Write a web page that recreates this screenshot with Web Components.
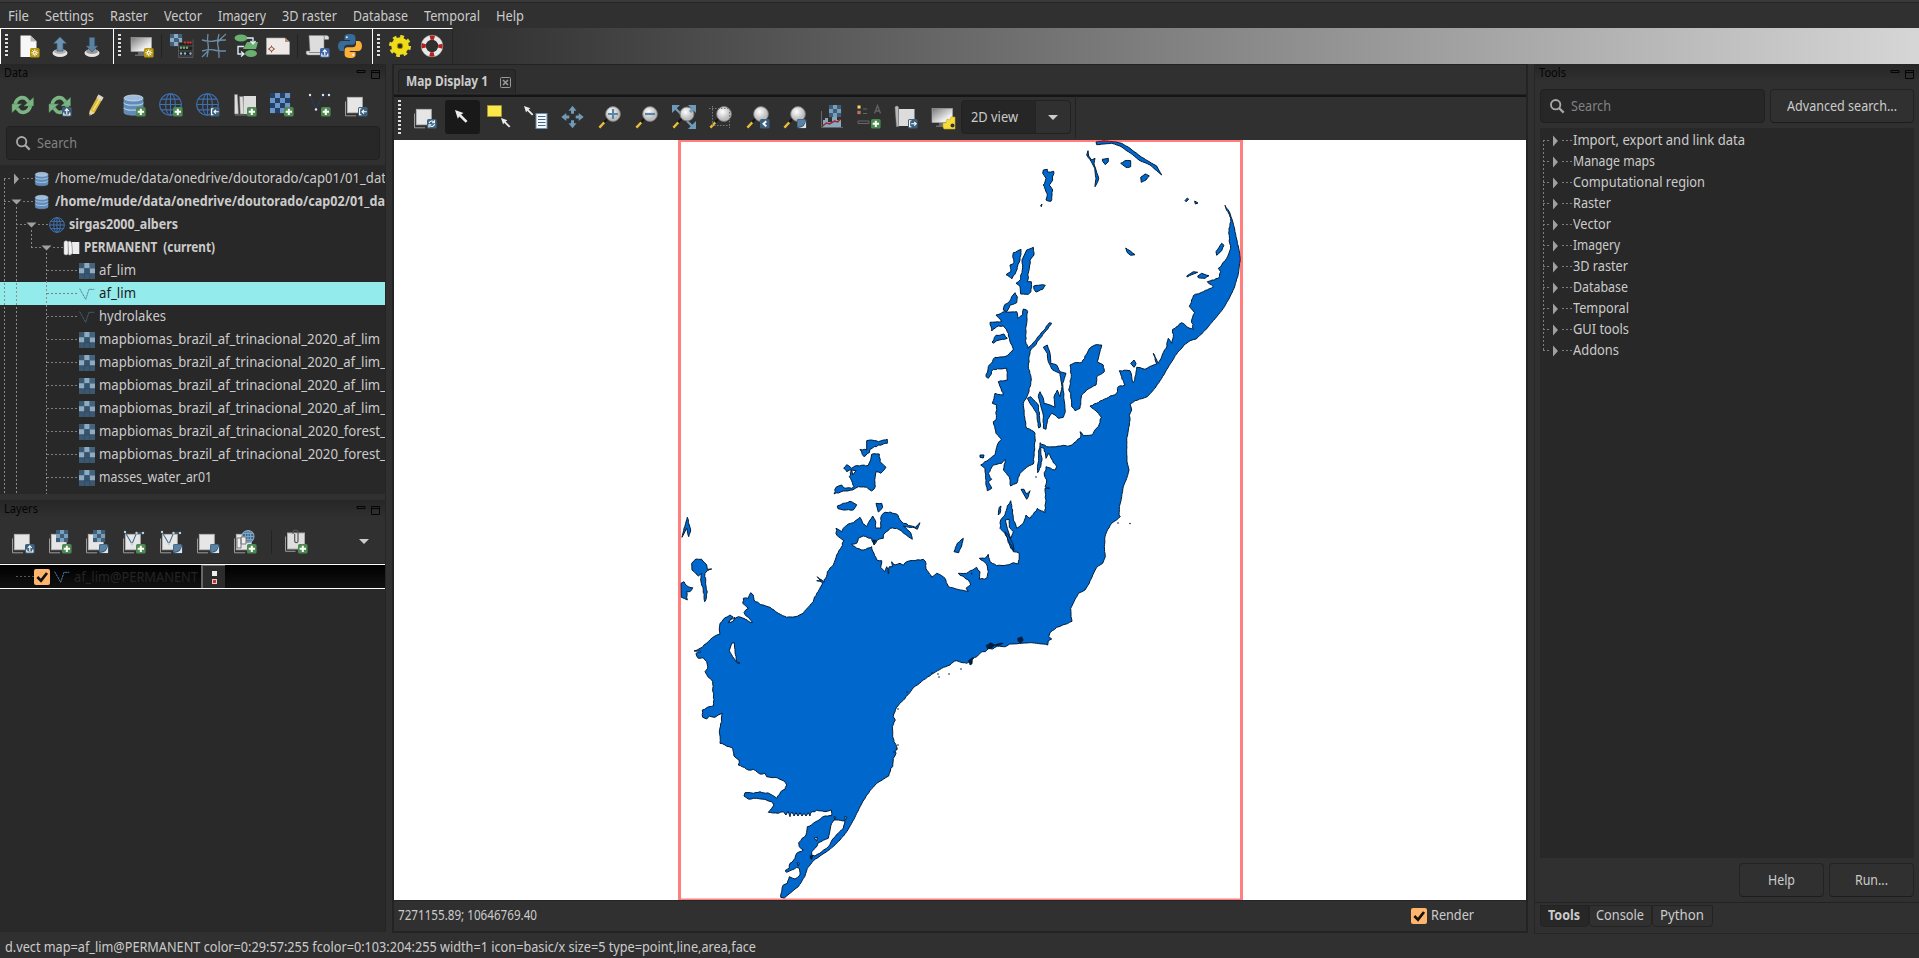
<!DOCTYPE html>
<html lang="en">
<head>
<meta charset="utf-8">
<title>GRASS GIS</title>
<style>
html,body{margin:0;height:100%;background:#303030;overflow:hidden}
body{font-family:"Noto Sans","Open Sans",sans-serif;font-size:14.6px;color:#cbcbcb}
</style>
</head>
<body>
<gis-window></gis-window>
<script>
const define = (name, css, html, after) => customElements.define(name, class extends HTMLElement {
  connectedCallback() {
    if (this.shadowRoot) return;
    const root = this.attachShadow({mode: 'open'});
    const body = typeof html === 'function' ? html(this) : html;
    root.innerHTML = `<style>*{box-sizing:border-box}${css}</style>${body}`;
    if (after) after(this, root);
  }
});

/* Text condensed to a given width */
define('fit-text', `:host{display:inline-block;white-space:pre;line-height:20px;flex:none;margin-bottom:3px}
  span{display:inline-block;transform-origin:0 50%}`, '<span><slot></slot></span>', (el, root) => {
  const span = root.querySelector('span'), w = +el.getAttribute('w');
  const natural = span.getBoundingClientRect().width;
  el.style.width = w + 'px';
  if (natural) span.style.transform = `scaleX(${w / natural})`;
});

/* ---------- icons ---------- */
const badge = (fill, inner) => `<rect x="14" y="14" width="9.6" height="9.6" rx="1.6" fill="${fill}"/>${inner}`;
const PLUS = badge('#4c8a50', '<path d="M18.8 15.7v6.3M15.7 18.8h6.3" stroke="#fff" stroke-width="2"/>');
const UP = badge('#3e607e', '<path d="M18.8 21v-4.6M16.8 18l2-2.2 2 2.2M15.8 19.5V22h6v-2.5" stroke="#fff" stroke-width="1.1" fill="none"/>');
const UPB = badge('#3f64a4', '<path d="M18.8 21v-4.6M16.8 18l2-2.2 2 2.2M15.8 19.5V22h6v-2.5" stroke="#fff" stroke-width="1.1" fill="none"/>');
const IN = badge('#3c5f7b', '<path d="M17.4 15.8h-1.8v6h1.8M22.8 18.8h-4.5M20 16.9l-2 1.9 2 1.9" stroke="#fff" stroke-width="1.1" fill="none"/>');
const OUT = badge('#3c5f7b', '<path d="M17.4 15.8h-1.8v6h1.8M17.2 18.8h4.8M20.2 16.9l2 1.9-2 1.9" stroke="#fff" stroke-width="1.1" fill="none"/>');
const RE = badge('#3c6583', '<path d="M16 18.2a3 3 0 0 1 4.6-1.6M21.6 19.2a3 3 0 0 1-4.6 1.7M21.4 15.2v2.6h-2.4M16 22.4v-2.6h2.4" stroke="#fff" stroke-width="1.1" fill="none"/>');
const BACK = badge('#3c5f7b', '<path d="M20.3 16.2l-2.8 2.6 2.8 2.6" stroke="#fff" stroke-width="1.9" fill="none"/>');
const STAR = badge('#b8960c', '<g stroke="#fff" stroke-width="1"><path d="M18.8 15.3v7M15.3 18.8h7M16.4 16.4l4.8 4.8M21.2 16.4l-4.8 4.8"/></g><circle cx="18.8" cy="18.8" r="1.3" fill="#b8960c" stroke="#fff" stroke-width=".9"/>');
const MOON = badge('#33536f', '<path d="M14.500 14.500h7.500v2.500q-1 4.500-7.500 5z" fill="#5d82a1"/><path d="M23 15.200v7.800h-8q7.500-.6 8-7.800z" fill="#dfe5ea"/>');
const LAYER = '<path d="M1.5 8.5v14.3h10.6" fill="none" stroke="#9a9a9a" stroke-width="1"/><rect x="3.3" y="4.3" width="15" height="15.5" fill="#e6e6e6" stroke="#b5b5b5" stroke-width=".8"/>';
const globe = (cx, cy, r, s, f = 'none') => `<g fill="${f}" stroke="${s}" stroke-width="1.1"><circle cx="${cx}" cy="${cy}" r="${r}"/><ellipse cx="${cx}" cy="${cy}" rx="${r*.45}" ry="${r}" fill="none"/><path d="M${cx-r} ${cy}h${2*r}M${cx-r*.85} ${cy-r*.5}h${1.7*r}M${cx-r*.85} ${cy+r*.5}h${1.7*r}M${cx} ${cy-r}v${2*r}"/></g>`;
const check = (x, y, s, n, a, b) => { let o = ''; for (let i = 0; i < n; i++) for (let j = 0; j < n; j++) o += `<rect x="${x+i*s}" y="${y+j*s}" width="${s+.1}" height="${s+.1}" fill="${(i+j)%2 ? b : a}"/>`; return o; };
const LENS = '<path d="M1.4 22.6l5-5.4" stroke="#e9bd37" stroke-width="2.4"/><path d="M6.2 17.2l3.2-3.4" stroke="#161616" stroke-width="2.2"/><circle cx="15" cy="9" r="7.4" fill="url(#lg)" stroke="#777" stroke-width=".9"/>';
const MON = '<rect x="1" y="3.5" width="20.5" height="14" fill="url(#mg)" stroke="#aaa" stroke-width=".6"/><path d="M8 18h7v2.6h3v1.4H5v-1.4h3z" fill="#6a6a6a"/>';
const VLINE = '<path d="M3 2l7 12L14.5 3H21" fill="none" stroke="#4a6f8e" stroke-width="1.1"/>';
const dots = (l, c) => l.map(([x, y]) => `<circle cx="${x}" cy="${y}" r="1.2" fill="${c}"/>`).join('');
const VDOTS = [[3,2],[10,14],[14.5,3],[21,3]];
const DB = '<path d="M2 5v14.5c0 3.6 19 3.6 19 0V5" fill="#5f8cba"/><path d="M2 9.5c0 3.6 19 3.6 19 0M2 14.5c0 3.6 19 3.6 19 0" fill="none" stroke="#b5cce3" stroke-width="1.3"/><ellipse cx="11.5" cy="5" rx="9.5" ry="3" fill="#9dbcdb" stroke="#dbe7f2" stroke-width=".7"/><path d="M2 5v14.5c0 3.6 19 3.6 19 0V5" fill="none" stroke="#7797b5" stroke-width=".7"/>';
const SYNC = '<g fill="none" stroke="#7ab583" stroke-width="3.600"><path d="M4.200 11.500C4.800 6.500 9.500 3.200 14.500 5.400l3.500 3.800"/><path d="M19.300 12.500C18.700 17.500 14 20.800 9 18.600L5.500 14.800"/></g><g fill="#7ab583" stroke="#4f8a58" stroke-width=".5"><path d="M22.500 4.500v8.500h-9.500zM1 19.500V11h9.500z"/></g>';
const BOOKS = '<path d="M1.500 1.500h3l1 19.500h-4zM6.500 3.500h3.500l.8 17.500h-3.600z" fill="#ddd" stroke="#777" stroke-width=".6"/><rect x="10.500" y="3" width="12.500" height="18" fill="#dcdcdc"/><path d="M2 22h20" stroke="#777"/>';
const ARR = (x, y, k = 1) => `<path transform="translate(${x} ${y}) scale(${k})" d="M0 0l8.500 3-2.400 1.600 6.400 6.400-1.800 1.800L4.300 6.400 2.800 8.800z" fill="#ececec"/>`;
const PAN = '<path d="M11.500 0l4 5h-2.500v3h-3V5H7.500z"/>';
const ICONS = {
  file: '<path d="M4.500 1.500h10l6 6v15.500H4.500z" fill="#f7f7f7"/><path d="M14.500 1.500v6h6z" fill="#b5b5b5"/>' + STAR,
  open: '<ellipse cx="12" cy="19" rx="7.500" ry="4" fill="#e4e4e4"/><ellipse cx="12" cy="17.500" rx="6" ry="2.500" fill="#b0b0b0"/><path d="M12 2.800l6.600 6.700h-3.600v7.500H9V9.500H5.400z" fill="#6d92b0" stroke="#39566f" stroke-width=".7"/>',
  save: '<ellipse cx="12" cy="19" rx="7.500" ry="4" fill="#e4e4e4"/><ellipse cx="12" cy="17.500" rx="6" ry="2.500" fill="#999"/><path d="M12 18l6-6h-3.300V3.500H9.300V12H6z" fill="#5a82a2" stroke="#39566f" stroke-width=".7"/>',
  display: MON + STAR,
  calc: check(0, 0, 4, 3, '#40607c', '#8aa8c2') + '<path d="M9 9h14v15H9z" fill="#222"/><path d="M8.500 5v18.500h14.500V5.500M9 12h14M9 17h14M9 22h14" stroke="#555" fill="none"/>' + dots([[15,8.500],[18,8.500],[20.500,8.500]], '#c4302f') + dots([[11,13.800],[14,13.800],[17,13.800]], '#70b070') + dots([[11,19.500],[15,19.500],[20.500,19.500]], '#8db6db'),
  grid: '<path d="M6 0q-1 5 0 10t-1 13M17 0q-2 8-1 12t1 12M24 0q-5 4-8 8M0 6q8 2 12 1t12-1M0 17q8-2 12-1t12 1M0 23l6-6" fill="none" stroke="#6d8ca5" stroke-width="1.300"/>',
  model: '<ellipse cx="7" cy="4" rx="6.500" ry="3.500" fill="#6bb070"/><path d="M13 8h11l-2 7H9z" fill="#6bb070"/><ellipse cx="17" cy="19.500" rx="6" ry="3.500" fill="#6bb070"/><path d="M13 4h6v5M16.500 7l2.500 3 2.500-3M10 12.500H4V20h5M7 17.500l3 2.500-3 2.500" fill="none" stroke="#dcebf5" stroke-width="1.400"/>',
  card: '<path d="M.5 4h18.500l4.500 4v12.500H.5z" fill="#eee9e6" stroke="#aaa" stroke-width=".6"/><path d="M19 4v4h4.500z" fill="#b08f70"/><path d="M5.500 11.500v7M2 15h7" stroke="#93543d" stroke-width="1"/><circle cx="5.500" cy="15" r="2" fill="#eee9e6" stroke="#93543d"/>',
  script: '<path d="M3 1.500h18q3 1 1.500 4H18v15.500H2q-3-1-1.500-4H4z" fill="#ddd" stroke="#888" stroke-width=".5"/><path d="M3 18.500h12M18 5.500q1-2 0-3.500" stroke="#888" fill="none"/>' + UPB,
  python: '<path d="M11.700 0C6.600 0 6.500 2 6.500 3.500V6h5.700v1H4C1.500 7 0 9 0 12s1.400 5 3.600 5H6v-3c0-2 1.500-3.300 3.400-3.300h5.200c1.600 0 2.800-1.300 2.800-2.900V3.500C17.400 1 15 0 11.700 0z" fill="#366c9c"/><path d="M12.300 24c5.100 0 5.200-2 5.200-3.500V18h-5.700v-1H20c2.500 0 4-2 4-5s-1.400-5-3.600-5H18v3c0 2-1.500 3.300-3.400 3.300H9.400c-1.600 0-2.800 1.300-2.800 2.900v4.300C6.600 23 9 24 12.300 24z" fill="#fbb03b"/><circle cx="8.800" cy="3.200" r="1" fill="#eee"/><circle cx="15.200" cy="20.800" r="1" fill="#fff"/>',
  gear: '<circle cx="12" cy="12" r="9" fill="none" stroke="#eadb2b" stroke-width="4" stroke-dasharray="3.500 3.560"/><circle cx="12" cy="12" r="5.700" fill="none" stroke="#f0dc16" stroke-width="6"/><circle cx="12" cy="12" r="2.800" fill="#2b2b2b" stroke="#b39a08"/>',
  buoy: '<circle cx="12" cy="12" r="8.500" fill="none" stroke="#e8e8e8" stroke-width="4.600"/><circle cx="12" cy="12" r="8.500" fill="none" stroke="#b32020" stroke-width="4.600" stroke-dasharray="4.400 8.950" stroke-dashoffset="2.200"/><circle cx="12" cy="12" r="10.900" fill="none" stroke="#999" stroke-width=".5"/>',
  sync: SYNC, syncup: SYNC + UP,
  pencil: '<path d="M5 17L13.500 1.500l5 3L9.500 20 4 23z" fill="#d9b93a"/><path d="M13.500 1.500l5 3-2 3.500-5-3z" fill="#d9d0d0"/><path d="M5 17l4.500 3L4 23z" fill="#e7d8b2"/><path d="M8 17.500l7.500-13" stroke="#fbe68d" stroke-width="1.200"/><path d="M4.300 21v2l1.700-1z" fill="#333"/>',
  dbadd: DB + PLUS, db: DB,
  globeadd: globe(11.500, 11.500, 10.800, '#3f6fae') + PLUS, globein: globe(11.500, 11.500, 10.800, '#3f6fae') + IN, globe: globe(12, 12, 11, '#3f74b4').replace('stroke-width="1.1"', 'stroke-width="1.5"'),
  booksadd: BOOKS + PLUS,
  books: '<path d="M0 3q3-4 6 0v18q-3 3-6 0zM6 3q3-3 5.500 1l1 16q-3 4-5.500 2z" fill="#f2f2f2" stroke="#aaa" stroke-width=".8"/><path d="M12 3h11v18H13z" fill="#ececec"/>',
  rasadd: check(0, 0, 5, 4, '#263f66', '#6a95c9') + PLUS,
  vecadd: '<path d="M3 2l6 14L16 2h6" fill="none" stroke="#243c66" stroke-width="1"/>' + dots([[3,2],[9,16.500],[16,2],[22,2]], '#dfe9f5') + PLUS,
  layerin: LAYER + IN, layerup: LAYER + UP, layerre: LAYER + RE, layermoon: LAYER + MOON,
  lras: LAYER + check(8, 0, 4, 3, '#3e5f7b', '#7b9db8') + PLUS, lrasm: LAYER + check(8, 0, 4, 3, '#3e5f7b', '#7b9db8') + MOON,
  lvec: LAYER + VLINE + dots(VDOTS, '#b8d2e6') + PLUS, lvecm: LAYER + VLINE + dots(VDOTS, '#b8d2e6') + MOON,
  lweb: LAYER + globe(15, 6.500, 6, '#7fa5c4', '#3e6787') + '<path d="M4 8h4v10H4zM8 7h5v7H8z" fill="#eee" stroke="#777"/>' + PLUS,
  lclip: '<path d="M1.500 6.500v14.800h10" fill="none" stroke="#9a9a9a"/><rect x="3.500" y="3" width="17" height="16" fill="#dedede" stroke="#aaa"/><path d="M9 4V2.500a2.500 2.500 0 0 1 5 0V11a1.600 1.600 0 0 1-3.300 0V4" fill="none" stroke="#555" stroke-width="1.200"/>' + PLUS,
  raster: '<rect width="24" height="24" fill="#3b586f"/><path d="M8 0h8v8H8zM0 8h8v8H0zM16 8h8v8h-8z" fill="#8dabc2"/><path d="M16 0h8v8h-8z" fill="#44637c"/><path d="M8 8h8v8H8z" fill="#35536a"/><path d="M8 16v8M16 16v8M0 16h24" stroke="#2f4a60" stroke-width="1"/>',
  vector: '<path d="M1 4l9 16L15 5h8" fill="none" stroke="#557f9f" stroke-width="1.500" stroke-dasharray="3.500 1"/>',
  vectord: '<path d="M1 4l9 16L15 5h8" fill="none" stroke="#44657f" stroke-width="1.500" stroke-dasharray="3.500 1"/>',
  pointer: ARR(5, 5),
  select: '<rect x=".5" y=".5" width="14" height="11" fill="#fbe84a" stroke="#a89a28" stroke-dasharray="2 1"/>' + ARR(14, 13, .75),
  query: ARR(0, 1, .75) + '<rect x="12" y="8.500" width="11" height="15" fill="#f4f7fa" stroke="#6c8ba6"/><path d="M14 11.500h7.500M14 14.500h7.500M14 17.500h7.500M14 20.500h7.500" stroke="#45698a" stroke-width="1.200"/>',
  pan: `<g fill="#6f9ab8">${[0, 90, 180, 270].map(a => `<g transform="rotate(${a} 11.500 12) translate(0 .8)">${PAN}</g>`).join('')}</g>`,
  zin: LENS + '<path d="M15 4v10M10 9h10" stroke="#5c86a5" stroke-width="2.200"/>',
  zout: LENS + '<path d="M10 9h10" stroke="#5c86a5" stroke-width="2.200"/>',
  zext: '<path d="M3 3l6 6M22 23l-7-7M21 3l-3 3" stroke="#6f9ab8" stroke-width="2.400"/><path d="M0 0h8L0 8zM24 0h-8l8 8zM24 24h-8l8-8z" fill="#6f9ab8"/>' + LENS.replace('r="7.4"', 'r="7"') + '<path d="M17 0h7v7l-2-2-3 3-2-2 3-3z" fill="#6f9ab8"/>',
  zreg: LENS + '<path d="M3.500 1v19.500H21M0 3.500h20.500V23" fill="none" stroke="#777" stroke-dasharray="1.500 1.500"/>',
  zback: LENS + BACK, zmoon: LENS + MOON,
  chart: '<path d="M1.500 6v16.500H23" stroke="#666" fill="none"/><path d="M3 22V15h2v-2h3v4h4v-5h5v3h4v7z" fill="#87a9c1"/>' + check(9, 0, 4, 3, '#3e5f7b', '#7b9db8') + '<path d="M2.500 21l4-3 3 1 5-3 3 1 3-3" stroke="#a52525" stroke-width="1.500" fill="none"/>',
  deco: '<path d="M.5.500h3v3h-3zM.5 6h3v3h-3z" fill="#d65" stroke="#777" stroke-width=".5"/><path d="M.8.800h2.500v2.500H.8z" fill="#f5e342"/><path d="M6 4h4M6 8.500h4M1 16h11v2.500H1z" stroke="#666" fill="none"/><path d="M17.500 8.500L20.500.800l3 7.700M18.500 6h4" stroke="#616161" stroke-width="1.400" fill="none"/>' + PLUS,
  scroll: '<path d="M1 2q2-2 3.500 0v19.500H2.500z" fill="#bbb" stroke="#888" stroke-width=".5"/><path d="M5 4h15.500v17H4.800z" fill="#dcdcdc"/>' + OUT,
  mongear: MON + '<path d="M12 22v-4h3l1-4 3 1 1-3h4v12H13z" fill="#f6dc38" stroke="#c8a91e" stroke-width=".6"/><circle cx="21.500" cy="20.500" r="2" fill="#333"/>',
  tri: '<path d="M1 7h20l-10 10z" fill="#a0a0a0"/>', trir: '<path d="M6 1l10 11-10 11z" fill="#a0a0a0"/>',
  search: '<circle cx="10" cy="10" r="7" fill="none" stroke="#a8a8a8" stroke-width="2.800"/><path d="M15 15l7 7" stroke="#a8a8a8" stroke-width="3.400"/>',
  check: '<rect width="24" height="24" rx="3" fill="#ffb66c"/><path d="M5 12l5.500 5.500L19.500 6" fill="none" stroke="#111" stroke-width="4"/>'
};
define('gis-icon', ':host{display:inline-flex;flex:none;width:24px;height:24px}svg{width:100%;height:100%;overflow:visible}',
  el => `<svg viewBox="0 0 24 24"><defs><radialGradient id="lg" cx=".4" cy=".35"><stop offset="0" stop-color="#fff"/><stop offset="1" stop-color="#bdbdbd"/></radialGradient><linearGradient id="mg" x2="1" y2="1"><stop stop-color="#777"/><stop offset=".7" stop-color="#eee"/></linearGradient></defs>${ICONS[el.getAttribute('name')] || ''}</svg>`);

/* Row of icon slots; "|" is a separator */
define('icon-row', `:host{display:flex;align-items:center}
  gis-icon{margin:0 calc((var(--pitch) - 24px)/2)}
  .sep{width:1px;height:24px;background:#232323;margin:0 var(--sep-r,4px) 0 var(--sep-l,3px)}
  .on{background:#191919;border-radius:3px;display:flex;align-items:center;height:34px;width:35px;margin:0 1px;justify-content:center}.on gis-icon{margin:0}`,
  el => el.getAttribute('icons').split(' ').map(n => n === '|' ? '<div class="sep"></div>' : n[0] === '*' ? `<div class="on"><gis-icon name="${n.slice(1)}"></gis-icon></div>` : `<gis-icon name="${n}"></gis-icon>`).join(''));

define('tool-grip', ':host{display:block;flex:none;width:3px;background:repeating-linear-gradient(#ddd 0 2px,#2c2c2c 2px 4px)}', '');

define('menu-bar', `:host{display:flex;flex:none;gap:16px;align-items:center;height:28px;box-sizing:border-box;padding:2px 8px 0;border-top:2px solid #393939;box-shadow:inset 0 1px #262626}`,
  [['File',21],['Settings',49],['Raster',38],['Vector',38],['Imagery',48],['3D raster',55],['Database',55],['Temporal',56],['Help',28]].map(([t, w]) => `<fit-text w="${w}">${t}</fit-text>`).join(''));

define('main-toolbar', `:host{display:flex;flex:none;height:36px;background:linear-gradient(90deg,#2f2f2f 452px,#d6d6d6)}
  .b{display:flex;align-items:center;background:#303030;border-top:1px solid #fff;border-left:1px solid #fff;--pitch:32px;padding:0 0 1px 4px}
  tool-grip{height:24px}icon-row{margin-left:4px}`,
  `<div class="b" style="width:113px"><tool-grip></tool-grip><icon-row icons="file open save"></icon-row></div>
   <div class="b" style="width:259px"><tool-grip></tool-grip><icon-row style="margin-left:5px" icons="display | calc grid model card | script python"></icon-row></div>
   <div class="b" style="width:81px;border-right:1px solid #262626"><tool-grip></tool-grip><icon-row icons="gear buoy"></icon-row></div>`);

define('panel-title', `:host{display:flex;height:18px;align-items:center;padding:0 4px;background:linear-gradient(#262626,#303030);color:#050505;font-size:12.500px;flex:none}
  svg{margin:2px 0 0 auto}fit-text{margin:0}`,
  el => `<fit-text w="${el.getAttribute('w')}">${el.getAttribute('text')}</fit-text><svg width="25" height="11" fill="none" stroke="#050505"><path d="M1 1.500h8v2h-8zM15.500 1.500h8v8h-8zM15.500 3.500h8"/></svg>`);

define('search-field', `:host{display:flex;box-sizing:border-box;align-items:center;height:34px;background:#272727;border:1px solid #202020;border-radius:4px;padding-left:8px;color:#828282}
  gis-icon{width:16px;height:16px;margin-right:6px}`, '<gis-icon name="search"></gis-icon><fit-text w="40">Search</fit-text>');

define('tree-row', `:host{display:flex;align-items:center;height:var(--row,23px);white-space:nowrap;flex:none}
  .d{height:1px;flex:none;background:repeating-linear-gradient(90deg,#7d7d7d 0 2px,transparent 2px 4px)}
  .a{width:12px;height:12px;flex:none}.i{width:16px;height:16px}
  fit-text{margin-left:var(--gap,4px)}`,
  el => { const [pad, d1, d2] = el.getAttribute('g').split(',').map(Number), a = el.getAttribute('arrow'), i = el.getAttribute('icon');
    return `<span style="flex:none;width:${pad}px"></span><span class="d" style="width:${d1}px"></span>${a ? `<gis-icon class="a" name="${a}"></gis-icon><span class="d" style="width:${d2}px"></span>` : ''}${i ? `<gis-icon class="i" name="${i}"></gis-icon>` : ''}<fit-text w="${el.getAttribute('w')}"><slot></slot></fit-text>`; },
  (el, root) => { if (el.textContent) root.querySelector('fit-text').textContent = el.textContent; });

const mb = 'mapbiomas_brazil_af_trinacional_2020_', kid = (i, w, t, c = '') => `<tree-row ${c} g="47,32" icon="${i}" w="${w}">${t}</tree-row>`;
define('data-tree', `:host{display:flex;box-sizing:border-box;flex-direction:column;position:relative;height:329px;background:#282828;overflow:hidden;padding-top:2px}
  .sel{background:#94ebeb;color:#1c1c1c}.b{font-weight:700}
  .lines{position:absolute;inset:0}`,
  `<tree-row style="--gap:5px" g="4,7,11" arrow="trir" icon="db" w="331">/home/mude/data/onedrive/doutorado/cap01/01_dat</tree-row>
   <tree-row class="b" style="--gap:5px" g="4,7,11" arrow="tri" icon="db" w="330">/home/mude/data/onedrive/doutorado/cap02/01_da</tree-row>
   <tree-row class="b" g="16,10,11" arrow="tri" icon="globe" w="109">sirgas2000_albers</tree-row>
   <tree-row class="b" g="31,10,11" arrow="tri" icon="books" w="131">PERMANENT  (current)</tree-row>
   ${kid('raster', 37, 'af_lim')}${kid('vector', 37, 'af_lim', 'class="sel"')}${kid('vectord', 67, 'hydrolakes')}
   ${kid('raster', 281, mb + 'af_lim')}${kid('raster', 287, mb + 'af_lim_').repeat(3)}${kid('raster', 287, mb + 'forest_').repeat(2)}${kid('raster', 113, 'masses_water_ar01')}
   <svg class="lines" width="386" height="329" stroke="#8a8a8a" stroke-dasharray="2 2"><path d="M4.500 14v315M16.500 42v287M31.500 65v18M46.500 88v241"/></svg>`);

define('layers-list', `:host{display:block;flex:1;background:#292929;border-top:1px solid #232323}
  .row{display:flex;align-items:center;height:25px;border:solid #fff;border-width:1px 0;background:linear-gradient(#000,#111);color:#242424;padding-left:16px}
  .d{width:18px;height:1px;background:repeating-linear-gradient(90deg,#555 0 2px,transparent 2px 4px)}
  .btn{width:24px;height:23px;background:#2b2b2b;border-left:2px solid #666;border-top:1px solid #666;margin-left:3px;display:flex;flex-direction:column;align-items:center;justify-content:center;gap:3px}
  .btn i{width:5px;height:5px;background:#eee}.btn i+i{background:#c33;border:1px solid #e8c8c8}
  fit-text{font-size:15px;margin-bottom:1px}`,
  `<div class="row"><span class="d"></span><gis-icon name="check" style="width:16px;height:16px"></gis-icon><gis-icon name="vector" style="width:16px;height:16px;margin:0 4px"></gis-icon><fit-text w="124">af_lim@PERMANENT</fit-text><span class="btn"><i></i><i></i></span></div>`);

define('left-side', `:host{display:flex;box-sizing:border-box;flex-direction:column;width:386px;height:868px;border-right:1px solid #252525;--pitch:37px}
  icon-row{padding-left:4.5px}search-field{margin:0 5px 5px 6px}
  .lt{display:flex;height:45px;align-items:center;--sep-l:7px;--sep-r:6px;padding-top:2px}
  .lt i{margin-left:auto;margin-right:16px;border:5px solid transparent;border-top-color:#ccc;border-bottom:0}`,
  `<panel-title w="24" text="Data"></panel-title>
   <icon-row style="height:44px;padding-top:2px;box-sizing:border-box" icons="sync syncup pencil dbadd globeadd globein booksadd rasadd vecadd layerin"></icon-row>
   <search-field></search-field><data-tree></data-tree><div style="height:6px"></div>
   <panel-title w="34" text="Layers"></panel-title>
   <div class="lt"><icon-row icons="layerup lras lrasm lvec lvecm layermoon lweb | lclip"></icon-row><i></i></div>
   <layers-list></layers-list>`);

/* ---------- map ---------- */
/* Survey sheets: origin of each sheet on the canvas; sheet units are a third of a pixel. */
const SHEETS = {A: [960, 130], B: [670, 420], C: [950, 420], D: [670, 620]};
let seed = 7;
const rnd = () => (seed = (seed * 16807) % 2147483647) / 2147483647 - .5;
/* Tokens: a sheet letter, "~n" for the coast roughness, or x,y */
function outline(src) {
  let sh = SHEETS.A, rough = .6, pts = [];
  for (const t of src.trim().split(/\s+/)) {
    if (SHEETS[t]) { sh = SHEETS[t]; continue; }
    if (t[0] === '~') { rough = +t.slice(1); continue; }
    const [x, y] = t.split(',').map(Number);
    const p = [sh[0] + x / 3 - 394, sh[1] + y / 3 - 140, rough];
    const q = pts[pts.length - 1];
    if (q && rough) {
      const len = Math.hypot(p[0] - q[0], p[1] - q[1]), n = Math.min(8, Math.floor(len / 2.2));
      const q0 = q.slice();
      for (let i = 1; i < n; i++) pts.push([q0[0] + (p[0] - q0[0]) * i / n + rnd() * rough * 2, q0[1] + (p[1] - q0[1]) * i / n + rnd() * rough * 2, rough]);
    }
    pts.push(p);
  }
  return 'M' + pts.map(p => p[0].toFixed(1) + ' ' + p[1].toFixed(1)).join('L') + 'Z';
}
const LAND = [
 `A ~.25 795,226 808,245 816,268 822,290 828,320 836,355 841,385 838,410 833,440 822,475 808,505 790,535 770,560 745,590 725,612 708,627 690,632 672,645 650,672 628,706 605,745 585,775 562,800 545,806 525,812 510,822 515,840 508,856 510,870 505,900 500,930 500,965 501,995 507,1020
  C 530,175 520,200 515,230 508,260 507,285 511,290 500,300 485,310 470,335 465,350 463,380 466,410 458,430 440,442 428,465 418,490 405,510 385,520 372,545 362,565 363,590 366,604 345,613 320,622 300,638 296,650 305,657 295,662 293,675 280,672 245,668 215,670 185,672 ~1 160,680 135,682 110,690 85,705 65,720 50,730 20,722 5,730
  D ~.4 840,135 815,145 785,163 760,180 730,203 718,220 695,245 680,262 670,290 676,300 667,320 668,350 ~1 672,365 680,380 678,400 670,415 668,440 656,468 ~.2 640,478 620,490 600,512 578,545 560,580 545,610 530,635 510,660 480,688 450,708 430,722 412,745 404,770 385,800 360,820 343,834 332,832
  ~.6 335,815 340,795 352,790 358,770 375,777 390,765 388,745 380,742 365,750 350,757 345,752 358,745 360,730 375,715 380,700 400,690 388,680 386,668 392,662 408,645 412,620 430,610 450,598 465,588 485,587 484,570 465,575 445,572 440,570 435,575 425,575 420,588 415,578 408,588 402,580 396,588 390,578 384,588 378,578 372,588 366,576 360,590 354,574 348,585 340,575 325,580 295,577 305,565 312,555 305,545 285,538 260,535 235,537 222,528 225,518 250,520 270,515 300,522 320,535 332,515 345,508 350,495 340,482 315,472 290,470 285,460 270,462 250,448 235,450 205,435 207,420 192,408 188,385 165,375 150,370 148,335 155,305 157,280 145,285 135,292 118,288 110,297 98,292 97,270 110,263 130,258 131,225 128,205 128,185 115,172 105,155 113,145 110,125 100,113 85,115 78,100 92,97 90,93 72,93 90,85 115,65 135,48 150,42
  B 148,630 150,610 160,598 180,585 190,592 175,608 205,590 225,597 240,607 248,607 235,592 222,578 235,565 218,550 220,535 235,535 242,518 250,525 255,545 280,555 300,562 325,580 350,592 375,590 400,580 415,562 430,545 440,520 458,488 440,482 452,483 442,470 462,487 472,455 490,435 500,405 512,385 522,362 500,345 498,325 515,335 520,325 535,312 550,308 570,292 578,310 590,320 600,300 608,288 615,300 618,325 632,325 632,295 640,280 660,276 680,282 690,300 700,310 725,318 738,322 750,308 742,328 728,322 700,318 722,338 727,358 715,350 695,333 680,325 660,325 640,345 640,355 622,360 612,375 605,355 580,348 565,355 560,370 545,372 560,385 580,390 605,380 612,400 620,420 635,422 632,442 645,455 650,440 655,462 658,440 668,440 665,425 675,435 690,430 700,436 710,425 735,422 760,418 768,430 770,450 785,472 800,460 825,475 835,500 870,510 895,514
  C 48,505 62,495 55,480 45,475 25,460 50,460 80,442 90,455 88,478 110,475 115,455 108,430 88,415 105,415 115,403 120,425 140,437 170,435 190,428 205,432 208,400 190,395 180,370 165,340 150,325 152,300 165,285 172,258 182,242 188,270 190,300 200,325 220,310 228,285 240,295 262,265 285,278 288,240 285,205 300,205 285,200 290,180 283,165 288,140 315,150 320,140 308,122 295,100 288,115 282,85 272,82 276,120 272,140 263,158 264,130 266,100 270,68 290,80 360,77 390,55
  A 362,920 360,905 370,917 395,915 415,890 424,862 415,850 390,828 410,820 440,805 470,790 475,770 495,765 478,722 510,722 515,740 520,758 525,740 530,712 555,718 590,702 580,670 595,700 605,680 618,655 625,625 635,640 640,620 638,598 665,578 680,590 700,598 695,570 704,548 688,530 700,497 730,485 760,470 742,455 775,445 782,425 775,415 785,405 800,385 812,355 806,310 812,265 795,226`,
 `A ~.5 200,540 190,537 188,555 175,565 170,545 135,545 108,555 125,575 90,577 95,603 110,590 130,587 145,610 150,635 160,660 135,680 105,682 85,710 78,740 85,745 100,718 140,715 142,750 115,755 130,795 105,790 97,820 110,825 108,870 100,875 108,910 125,928 112,945 105,975 62,1005 75,1015
  C 105,150 108,195 112,212 125,205 115,185 125,178 115,160 130,135 155,130 165,118 160,150 178,170 182,198 200,190 210,160 230,142 250,132 254,90 255,40 A 222,905 200,895 195,870 190,820 205,790 214,750 205,710 210,665 245,620 275,580 268,578 240,615 205,655 198,640 198,590 203,545`,
 'A 250,120 262,118 262,126 281,124 278,150 268,165 278,180 273,214 258,210 262,192 250,165 258,145 248,130','A ~.2 242,226 246,222 244,230','A ~.2 408,36 430,32 470,36 485,40 510,55 540,78 575,100 590,108 605,135 590,122 570,105 540,92 505,65 480,48 455,40 410,44',
 'A ~.2 384,62 386,78 395,90 405,85 402,100 408,120 416,145 412,158 405,170 408,145 404,115 394,95 380,75','A 427,88 445,85 445,95 436,104 428,94','A 482,100 495,92 512,92 512,110 498,112','A 542,142 555,132 568,138 558,150 544,157','A ~.2 675,212 682,204 686,208 678,215','A ~.2 704,213 714,219 706,222','A ~.3 768,365 785,340 792,346 785,362 770,376','A ~.3 497,354 510,362 525,374 512,376 502,368','A ~.3 680,438 700,425 713,427 695,434 682,441','A ~.3 713,438 725,430 747,437 735,445 715,443',
 'A 160,368 183,358 180,390 168,425 156,446 138,434 152,425 150,405 162,398 158,380','A 200,360 220,352 222,375 210,390 208,415 202,455 214,455 213,485 205,493 182,492 180,470 168,460 182,448 188,405 186,390','A 221,468 235,466 248,464 256,466 248,478 228,486 222,478','A 165,488 172,500 170,518 150,525 140,545 130,540 134,524 148,515 155,500','A 96,636 108,616 132,612 142,625 110,632 100,640',
 'A ~.3 250,652 262,645 270,670 272,700 290,705 300,725 318,730 308,760 316,845 310,862 295,865 285,855 275,850 262,870 258,898 250,895 250,855 235,800 240,785 250,805 252,820 270,825 285,832 282,800 292,780 300,800 306,770 300,730 278,720 265,695 262,670','A ~.3 202,805 212,800 235,825 242,890 236,894 230,850 210,820',
 'A ~.4 405,645 425,645 412,695 430,705 433,725 410,740 408,765 380,780 365,795 360,835 345,842 335,830 332,790 326,780 334,740 330,705 345,698 365,698 380,672 392,652','A 512,700 522,690 528,700 522,712','A 60,975 72,975 70,984 60,982',
 'B 590,62 605,60 625,65 652,58 652,70 625,75 600,88 598,98 582,110 570,88 590,90','B 605,103 628,102 630,125 648,142 632,160 618,155 614,180 616,200 605,213 590,202 565,200 548,210 520,213 492,222 498,202 515,195 525,205 545,205 552,200 538,170 545,150 530,155 521,145 530,134 545,145 555,138 595,136 602,120','B 502,258 520,250 540,244 560,254 550,270 520,270 504,266','B 618,250 635,250 638,262 625,276','B ~.3 852,395 862,370 880,355 875,378 866,398','B ~.3 36,352 42,325 48,305 52,292 58,315 62,330 56,350 50,325','B 65,430 78,417 95,418 110,435 112,448 125,447 112,452 105,460 108,498 112,515 104,545 100,510 92,480 95,460 85,468 66,450','B 33,490 42,485 55,500 68,503 60,515 50,515 52,540 34,532',
 'C ~.3 145,285 148,262 153,258 150,280','C ~.4 213,208 222,208 230,222 240,212 235,230 230,238','C ~.3 188,370 192,392 182,385 165,335 175,345'
];
const WATER = ['D ~.4 492,600 525,602 520,625 505,640 490,655 475,680 455,695 435,708 425,705 425,695 440,680 445,668 475,655 480,630 485,610','D ~.3 185,70 193,68 195,95 200,125 210,130 200,128 188,110 178,92','B ~.3 178,603 195,592 190,603 180,608','C ~.3 166,300 178,298 178,322 190,335 182,355 172,325','B ~.2 545,150 558,152 548,165','D ~.2 432,655 442,652 440,662','D ~.1 382,728 388,730 384,738','D ~.1 492,590 498,592 494,598','D ~.1 524,590 531,592 526,600'];
const DARK = ['C ~.3 203,655 215,650 220,660 212,670 204,664','C ~1 108,676 122,668 135,675 160,670 150,676 130,680 112,686','C ~.6 55,722 70,712 66,732 60,735','D ~.3 420,707 428,707 426,718 421,716','B ~.4 608,360 618,361 612,371'];
const SPOTS = [[971.7,573.6],[1118,523],[1130,523.5],[939,677],[932,673],[961,669],[938,674],[949,674],[898,709],[898,745],[907,692],[1036,477],[897,749],[894,752]];
define('map-canvas', ':host{display:block;flex:none;width:1132px;height:760px;background:#fff;overflow:hidden}svg{display:block}',
  () => `<svg width="1132" height="760"><path d="${LAND.map(outline).join('')}" fill="#0067cc" stroke="#001d39" stroke-width="1"/>
   <path d="${WATER.map(outline).join('')}" fill="#fff" stroke="#001d39"/><path d="${DARK.map(outline).join('')}" fill="#001d39" stroke="#001d39" stroke-width=".6"/>
   ${SPOTS.map(([x, y]) => `<circle cx="${x-394}" cy="${y-140}" r=".8" fill="#001d39"/>`).join('')}
   <g fill="#ff0000" fill-opacity=".5"><path d="M284 0h565v2H284zM284 758.500h565v1.500H284zM284 2h3v756.500h-3zM846 2h3v756.500h-3z"/></g></svg>`);

define('map-toolbar', `:host{display:flex;flex:none;box-sizing:border-box;height:45px;align-items:center;padding:0 0 3px 4px;border-top:2px solid #151515;--pitch:37px}
  tool-grip{height:34px;margin-right:5.500px}
  .combo{display:flex;width:110px;height:34px;border:1px solid #222;border-radius:4px;background:#262626;margin-left:-1px}
  .combo div{flex:1;padding:5px 0 0 9px}.combo b{width:35px;background:#303030;border-left:1px solid #232323;display:flex;align-items:center;justify-content:center;border-radius:0 4px 4px 0}
  .combo i{border:5px solid transparent;border-top-color:#ccc;border-bottom:0}
  .end{width:1px;height:42px;background:#222;margin-left:4px}`,
  `<tool-grip></tool-grip><icon-row icons="layerre *pointer select query pan zin zout zext zreg zback zmoon chart deco scroll mongear"></icon-row>
   <div class="combo"><div><fit-text w="47">2D view</fit-text></div><b><i></i></b></div><div class="end"></div>`);

define('map-side', `:host{display:flex;box-sizing:border-box;flex-direction:column;width:1136px;height:869px;border:2px solid #232323;border-top-width:1px;margin-left:6px}
  .tabs{height:30px;flex:none;display:flex;border-bottom:1px solid #232323}
  .tab{margin:4px 0 0 4px;width:118px;height:24px;border:1px solid #222;border-bottom:0;border-radius:4px 4px 0 0;display:flex;align-items:center;padding:0 0 1px 7px;background:#2b2b2b}
  .tab svg{margin:2px 0 0 12px}
  .foot{flex:1;display:flex;align-items:center;padding:0 52px 1px 4px;justify-content:space-between;border-top:1px solid #252525}
  .foot span{display:flex;align-items:center}.foot gis-icon{width:16px;height:16px;margin-right:4px}`,
  `<div class="tabs"><div class="tab"><fit-text w="82" style="font-weight:700">Map Display 1</fit-text><svg width="11" height="11" fill="none" stroke="#999"><rect x=".5" y=".5" width="10" height="10" rx="1"/><path d="M3 3l5 5M8 3l-5 5" stroke-width="1.600"/></svg></div></div>
   <map-toolbar></map-toolbar><map-canvas></map-canvas>
   <div class="foot"><fit-text w="139">7271155.89; 10646769.40</fit-text><span><gis-icon name="check"></gis-icon><fit-text w="43">Render</fit-text></span></div>`);

define('push-button', ':host{display:flex;box-sizing:border-box;height:35px;border:1px solid #232323;border-bottom-color:#1c1c1c;border-radius:4px;align-items:center;justify-content:center;background:#303030}', '<slot></slot>');

const TOOLS = [['Import, export and link data',172],['Manage maps',82],['Computational region',132],['Raster',38],['Vector',38],['Imagery',47],['3D raster',55],['Database',55],['Temporal',56],['GUI tools',56],['Addons',46]];
define('tools-side', `:host{display:flex;box-sizing:border-box;flex-direction:column;width:385px;height:870px;margin-left:6px;border:solid #262626;border-width:0 0 1px 1px}
  .top{display:flex;gap:5px;margin:7px 5px 5px}search-field{width:225px}.top push-button{width:144px;height:34px}
  .tree{position:relative;height:730px;margin:0 5px;background:#282828;padding-top:2px;--row:21px;--gap:0px}
  .tree svg{position:absolute;left:0;top:0}
  .btns{display:flex;gap:5px;justify-content:flex-end;margin:5px 5px 5px}.btns push-button{width:85px;height:34px}
  .tabs{display:flex;height:28px;border-top:1px solid #232323;padding:2px 0 3px 5px;}
  .tabs div{border:1px solid #232323;border-radius:0 0 4px 4px;display:flex;justify-content:center;align-items:center;padding:0 1px 2px 0}`,
  `<panel-title w="27" text="Tools"></panel-title>
   <div class="top"><search-field></search-field><push-button><fit-text w="110">Advanced search...</fit-text></push-button></div>
   <div class="tree">${TOOLS.map(([t, w]) => `<tree-row g="3,7,11" arrow="trir" w="${w}">${t}</tree-row>`).join('')}<svg width="8" height="230"><path d="M3.500 12v211" stroke="#7d7d7d" stroke-dasharray="2 2"/></svg></div>
   <div class="btns"><push-button><fit-text w="27">Help</fit-text></push-button><push-button><fit-text w="33">Run...</fit-text></push-button></div>
   <div class="tabs"><div style="width:49px;background:#272727;font-weight:700"><fit-text w="32">Tools</fit-text></div><div style="width:63px"><fit-text w="48">Console</fit-text></div><div style="width:61px"><fit-text w="44">Python</fit-text></div></div>`);

define('gis-window', `:host{display:flex;box-sizing:border-box;flex-direction:column;width:1919px;height:958px;background:#303030}
  .main{display:flex;height:870px;flex:none}.status{height:24px;flex:none;display:flex;align-items:center;padding:3px 5px 0}`,
  `<menu-bar></menu-bar><main-toolbar></main-toolbar><div class="main"><left-side></left-side><map-side></map-side><tools-side></tools-side></div>
   <div class="status"><fit-text w="751">d.vect map=af_lim@PERMANENT color=0:29:57:255 fcolor=0:103:204:255 width=1 icon=basic/x size=5 type=point,line,area,face</fit-text></div>`);
</script>
</body>
</html>
